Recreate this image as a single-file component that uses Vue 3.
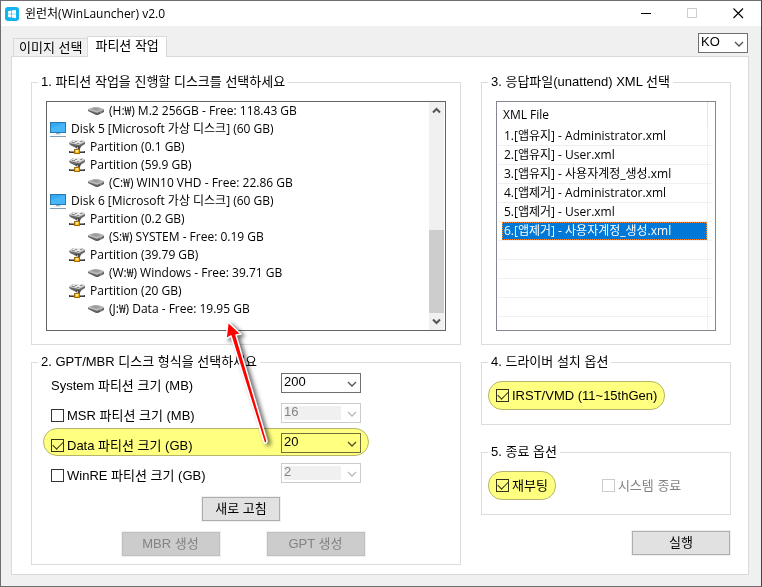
<template>
  <div class="window">
    <header class="title-bar">
      <svg class="app-icon" viewBox="0 0 14 14" aria-hidden="true">
        <rect width="14" height="14" rx="3" fill="#12b3ee" />
        <path d="M3 4.2 6.3 3.6V6.7H3zM6.9 3.5 11 2.8V6.7H6.9zM3 7.3H6.3V10.5L3 9.9zM6.9 7.3H11V11.3L6.9 10.6z" fill="#fff" />
      </svg>
      <h1>윈런처(WinLauncher) v2.0</h1>
      <div class="window-controls">
        <button type="button" aria-label="최소화">
          <svg viewBox="0 0 11 11"><path d="M0 5.5H10" stroke="#000" /></svg>
        </button>
        <button type="button" aria-label="최대화" disabled>
          <svg viewBox="0 0 11 11"><path d="M.5.5H9.5V9.5H.5z" fill="none" stroke="#ccc" /></svg>
        </button>
        <button type="button" aria-label="닫기">
          <svg viewBox="0 0 11 11"><path d="M.5.5 10 10M10 .5.5 10" stroke="#000" stroke-width="1.1" /></svg>
        </button>
      </div>
    </header>

    <main class="body">
      <div class="top-row">
        <nav class="tabs" role="tablist">
          <button
            v-for="tab in tabs"
            :key="tab"
            class="tab"
            :class="{ 'tab--active': tab === activeTab }"
            type="button"
            role="tab"
            :aria-selected="tab === activeTab"
            @click="activeTab = tab"
          >
            {{ tab }}
          </button>
        </nav>
        <span class="combo combo--lang">
          <select v-model="language" aria-label="언어">
            <option>KO</option>
            <option>EN</option>
          </select>
          <svg viewBox="0 0 10 6"><path d="M1 1 5 5 9 1" /></svg>
        </span>
      </div>

      <div class="panel">
        <div class="column column--left">
          <fieldset class="group">
            <legend>1. 파티션 작업을 진행할 디스크를 선택하세요</legend>
            <div class="group-list">
              <div class="tree">
                <ul>
                  <li v-for="node in nodes" :key="node.text" :class="`node node--${node.kind}`">
                    <svg v-if="node.kind === 'disk'" viewBox="0 0 16 16">
                      <rect x=".5" y="1.5" width="15" height="10" fill="#35a9f5" stroke="#2a78a8" />
                      <path d="M1 7 15 2V11H1z" fill="#55c0ff" opacity=".6" />
                      <path d="M6 12H10V13H6z" fill="#9ab4c4" />
                      <path d="M4 13.5H12" stroke="#dce6ec" />
                      <path d="M0 15.5H16" stroke="#7f9fb8" />
                    </svg>
                    <svg v-else-if="node.kind === 'partition'" viewBox="0 0 16 16">
                      <path d="M0 4 4 1H13L16 3V5L10 9 7 9 1 6z" fill="#6a6a6a" />
                      <path d="M0 4 4 1H13L16 3 10 6z" fill="#cfcfcf" />
                      <path d="M3 3 5 1H12L13 3 9 4.500z" fill="#e9e9e9" />
                      <path d="M3 3.500H6M6 2.500H8M8 4.500H10M11 2.500H13" stroke="#8b8b8b" />
                      <path d="M6 7H12L11 10H8z" fill="#4c4c4c" />
                      <path d="M8 8H9V11H8z" fill="#bbb" />
                      <path d="M0 12H16V14H0z" fill="#3c3c3c" />
                      <path d="M1 12.500H5M11 12.500H15" stroke="#909090" />
                      <rect x="5.500" y="10.500" width="5" height="4" fill="#f6b91e" stroke="#a86c00" />
                      <path d="M7 11H9V13H7z" fill="#ffeb9a" />
                    </svg>
                    <svg v-else viewBox="0 0 16 16">
                      <path d="M0 6V8L8 12H10L16 9V6L9 9z" fill="#5e5e5e" />
                      <path d="M0 6 6 4H10L16 6 9 9z" fill="#b2b2b2" />
                      <path d="M3 6 7 4.700 13 6 9 7.800z" fill="#9c9c9c" />
                      <path d="M0 6.500 9 9.500 16 6.500" fill="none" stroke="#d0d0d0" stroke-width=".7" />
                      <path d="M12 9.500 14 8.500" stroke="#8fae86" />
                    </svg>
                    <span>{{ node.text }}</span>
                  </li>
                </ul>
                <div class="scrollbar">
                  <button type="button" aria-label="위로">
                    <svg viewBox="0 0 9 7"><path d="M1 5.500 4.500 2 8 5.500" /></svg>
                  </button>
                  <div class="scroll-track"><div class="scroll-thumb"></div></div>
                  <button type="button" aria-label="아래로">
                    <svg viewBox="0 0 9 7"><path d="M1 1.500 4.500 5 8 1.500" /></svg>
                  </button>
                </div>
              </div>
            </div>
          </fieldset>

          <fieldset class="group group--format">
            <legend>2. GPT/MBR 디스크 형식을 선택하세요</legend>
            <div class="sizes">
              <div
                v-for="row in sizes"
                :key="row.id"
                class="size-row"
                :class="{ marked: row.checked }"
              >
                <div class="size-label">
                  <input v-if="row.optional" :id="`${row.id}-on`" v-model="row.checked" type="checkbox" />
                  <label :for="row.optional ? `${row.id}-on` : row.id">{{ row.label }}</label>
                </div>
                <span class="combo">
                  <select
                    :id="row.id"
                    v-model="row.value"
                    :aria-label="row.label"
                    :disabled="row.optional && !row.checked"
                  >
                    <option>{{ row.value }}</option>
                  </select>
                  <svg viewBox="0 0 10 6"><path d="M1 1 5 5 9 1" /></svg>
                </span>
              </div>
            </div>
            <div class="actions">
              <button class="btn btn--refresh" type="button">새로 고침</button>
            </div>
            <div class="actions actions--create">
              <button class="btn" type="button" disabled>MBR 생성</button>
              <button class="btn" type="button" disabled>GPT 생성</button>
            </div>
          </fieldset>

          <svg class="pointer" viewBox="0 0 60 140" aria-hidden="true">
            <path
              d="M12 7 10 24 15 21 48 127Q50 130 51 126L20 20 25 19z"
              fill="#fe0000"
              stroke="#fff"
              stroke-width="1.500"
              stroke-linejoin="round"
            />
          </svg>
        </div>

        <div class="column column--right">
          <fieldset class="group">
            <legend>3. 응답파일(unattend) XML 선택</legend>
            <div class="group-list">
              <div class="file-list">
                <table>
                  <thead>
                    <tr>
                      <th>XML File</th>
                      <td></td>
                    </tr>
                  </thead>
                  <tbody>
                    <tr
                      v-for="file in files"
                      :key="file"
                      :class="{ selected: file === selectedFile }"
                      @click="selectedFile = file"
                    >
                      <td><span>{{ file }}</span></td>
                      <td></td>
                    </tr>
                    <tr v-for="n in 4" :key="n">
                      <td></td>
                      <td></td>
                    </tr>
                    <tr class="last">
                      <td></td>
                      <td></td>
                    </tr>
                  </tbody>
                </table>
              </div>
            </div>
          </fieldset>

          <fieldset class="group group--driver">
            <legend>4. 드라이버 설치 옵션</legend>
            <div class="options">
              <label class="option marked">
                <input v-model="driver" type="checkbox" />
                <span>IRST/VMD (11~15thGen)</span>
              </label>
            </div>
          </fieldset>

          <fieldset class="group group--finish">
            <legend>5. 종료 옵션</legend>
            <div class="options">
              <label class="option marked">
                <input v-model="reboot" type="checkbox" />
                <span>재부팅</span>
              </label>
              <label class="option option--disabled">
                <input type="checkbox" disabled />
                <span>시스템 종료</span>
              </label>
            </div>
          </fieldset>

          <button class="btn btn--run" type="button">실행</button>
        </div>
      </div>
    </main>
  </div>
</template>

<script setup>
import { ref } from 'vue'

const tabs = ['이미지 선택', '파티션 작업']
const activeTab = ref('파티션 작업')
const language = ref('KO')

const nodes = [
  { kind: 'volume', text: '(H:₩) M.2 256GB - Free: 118.43 GB' },
  { kind: 'disk', text: 'Disk 5 [Microsoft 가상 디스크] (60 GB)' },
  { kind: 'partition', text: 'Partition (0.1 GB)' },
  { kind: 'partition', text: 'Partition (59.9 GB)' },
  { kind: 'volume', text: '(C:₩) WIN10 VHD - Free: 22.86 GB' },
  { kind: 'disk', text: 'Disk 6 [Microsoft 가상 디스크] (60 GB)' },
  { kind: 'partition', text: 'Partition (0.2 GB)' },
  { kind: 'volume', text: '(S:₩) SYSTEM - Free: 0.19 GB' },
  { kind: 'partition', text: 'Partition (39.79 GB)' },
  { kind: 'volume', text: '(W:₩) Windows - Free: 39.71 GB' },
  { kind: 'partition', text: 'Partition (20 GB)' },
  { kind: 'volume', text: '(J:₩) Data - Free: 19.95 GB' },
]

const sizes = ref([
  { id: 'system', label: 'System 파티션 크기 (MB)', value: '200', optional: false, checked: false },
  { id: 'msr', label: 'MSR 파티션 크기 (MB)', value: '16', optional: true, checked: false },
  { id: 'data', label: 'Data 파티션 크기 (GB)', value: '20', optional: true, checked: true },
  { id: 'winre', label: 'WinRE 파티션 크기 (GB)', value: '2', optional: true, checked: false },
])

const files = [
  '1.[앱유지] - Administrator.xml',
  '2.[앱유지] - User.xml',
  '3.[앱유지] - 사용자계정_생성.xml',
  '4.[앱제거] - Administrator.xml',
  '5.[앱제거] - User.xml',
  '6.[앱제거] - 사용자계정_생성.xml',
]
const selectedFile = ref(files[5])

const driver = ref(true)
const reboot = ref(true)
</script>

<style>
body {
  margin: 0;
}
</style>

<style scoped>
* {
  box-sizing: border-box;
}

.window {
  display: flex;
  flex-direction: column;
  min-height: 100vh;
  border: 1px solid #6e6e6e;
  border-right-color: #45433b;
  background: #f0f0f0;
  color: #000;
  font: 13px/16px "Liberation Sans", "Noto Sans CJK KR", sans-serif;
}

button,
select,
input {
  margin: 0;
  font: inherit;
  color: inherit;
}

/* title bar */
.title-bar {
  display: flex;
  align-items: center;
  height: 25px;
  padding-left: 4px;
  background: #fff;
}

.app-icon {
  width: 14px;
  height: 14px;
}

.title-bar h1 {
  flex: 1;
  margin: 0 0 0 6px;
  font: 12px/16px "Open Sans", "Noto Sans CJK KR", sans-serif;
}

.window-controls {
  display: flex;
}

.window-controls button {
  display: flex;
  justify-content: center;
  width: 46px;
  padding: 0;
  border: none;
  background: none;
}

.window-controls svg {
  width: 11px;
  height: 11px;
}

/* tabs */
.body {
  flex: 1;
  display: flex;
  flex-direction: column;
  padding: 0 12px 11px 10px;
}

.top-row {
  display: flex;
  justify-content: space-between;
  align-items: flex-end;
  height: 30px;
}

.tabs {
  position: relative;
  display: flex;
  align-items: flex-end;
  margin: 0 0 -1px 2px;
}

.tab {
  height: 19px;
  padding: 0 5px;
  border: 1px solid #d9d9d9;
  border-right: none;
  background: #f0f0f0;
}

.tab--active {
  height: 21px;
  padding: 0 7px 3px;
  border-right: 1px solid #d9d9d9;
  border-bottom: none;
  background: #fff;
}

.panel {
  flex: 1;
  display: flex;
  gap: 20px;
  padding: 17px 17px 8px 19px;
  border: 1px solid #d9d9d9;
  background: #fff;
}

.column {
  display: flex;
  flex-direction: column;
  gap: 9px;
  min-width: 0;
}

.column--left {
  position: relative;
  flex: 430;
}

.column--right {
  flex: 250;
}

/* group boxes */
.group {
  min-width: 0;
  margin: 0;
  padding: 0 6px;
  border: 1px solid #dcdcdc;
}

.group legend {
  height: 16px;
  padding: 0 3px;
  white-space: nowrap;
}

.group-list {
  padding: 11px 8px 13px;
}

/* disk tree */
.tree {
  display: flex;
  border: 1px solid #646464;
}

.tree ul {
  flex: 1;
  min-width: 0;
  margin: 0;
  padding: 0 0 12px;
  list-style: none;
  font: 12px/18px "Open Sans", "Noto Sans CJK KR", sans-serif;
}

.node {
  display: flex;
  align-items: center;
  gap: 5px;
  height: 18px;
  padding-left: 3px;
  white-space: nowrap;
}

.node--partition {
  padding-left: 22px;
}

.node--volume {
  padding-left: 41px;
}

.node svg {
  flex: none;
  width: 16px;
  height: 16px;
}

.scrollbar {
  display: flex;
  flex-direction: column;
  width: 16px;
  border-right: 1px solid #fff;
  background: #f0f0f0;
}

.scrollbar button {
  display: flex;
  align-items: center;
  justify-content: center;
  height: 17px;
  padding: 0;
  border: none;
  background: none;
}

.scrollbar svg {
  width: 9px;
  height: 7px;
  fill: none;
  stroke: #555;
  stroke-width: 2;
}

.scroll-track {
  flex: 1;
  display: flex;
  align-items: flex-end;
}

.scroll-thumb {
  width: 100%;
  height: 43%;
  background: #cdcdcd;
}

/* partition sizes */
.sizes {
  display: flex;
  flex-direction: column;
  gap: 10px;
  padding: 3px 13px 0;
}

.size-row {
  display: flex;
  align-items: flex-end;
  width: 310px;
  height: 20px;
}

.size-label {
  display: flex;
  align-items: center;
  gap: 3px;
  width: 230px;
  height: 15px;
}

.combo {
  position: relative;
  display: block;
  width: 80px;
  height: 20px;
}

.combo--lang {
  width: 50px;
  margin: 0 1px 3px 0;
}

.combo select {
  display: block;
  width: 100%;
  height: 100%;
  padding: 0 20px 2px 2px;
  border: 1px solid #707070;
  border-radius: 0;
  background: #fff;
  line-height: 16px;
  appearance: none;
}

.combo select:disabled {
  border-color: #ccc;
  background: linear-gradient(#f0f0f0, #f0f0f0) 2px 2px / 57px 14px no-repeat #fff;
  color: #838383;
  opacity: 1;
}

.combo svg {
  position: absolute;
  right: 4px;
  bottom: 6px;
  width: 10px;
  height: 6px;
  fill: none;
  stroke: #505050;
  stroke-width: 1.3;
  pointer-events: none;
}

.combo select:disabled + svg {
  stroke: #bbb;
}

input[type='checkbox'] {
  flex: none;
  width: 13px;
  height: 13px;
  border: 1px solid #333;
  background: #fff;
  appearance: none;
}

input[type='checkbox']:checked::before {
  content: '';
  display: block;
  width: 9px;
  height: 5px;
  margin: 1px;
  border: solid #333;
  border-width: 0 0 1px 1px;
  transform: rotate(-45deg);
}

input[type='checkbox']:disabled {
  border-color: #ccc;
}

/* highlighter over the options in use */
.marked {
  position: relative;
}

.marked::after {
  content: '';
  position: absolute;
  inset: -5px -8px;
  border: 1px solid #b5b56c;
  border-radius: 14px;
  background: #ffff80;
  mix-blend-mode: multiply;
  pointer-events: none;
}

.size-row.marked::after {
  bottom: -3px;
}

.actions {
  display: flex;
  justify-content: center;
  gap: 47px;
  padding: 14px 10px 0 0;
}

.actions--create {
  padding: 11px 6px 8px 0;
}

.btn {
  width: 98px;
  height: 24px;
  padding: 0 0 1px;
  border: 1px solid #adadad;
  background: #e1e1e1;
  box-shadow: 0 0 0 1px #f0f0f0;
}

.btn:disabled {
  border-color: #bfbfbf;
  background: #ccc;
  color: #838383;
}

.btn--refresh {
  width: 78px;
}

.btn--run {
  align-self: flex-end;
  margin: 7px 1px 0 0;
}

.pointer {
  position: absolute;
  top: 241px;
  left: 185px;
  width: 60px;
  height: 140px;
  overflow: visible;
  filter: drop-shadow(3px 2px 2px rgba(0, 0, 0, 0.6));
  pointer-events: none;
}

/* answer files */
.file-list {
  padding: 0 2px 0 1px;
  border: 1px solid #828790;
}

.file-list table {
  width: 100%;
  border-spacing: 0;
  table-layout: fixed;
  font: 12px/18px "Open Sans", "Noto Sans CJK KR", sans-serif;
}

.file-list th {
  height: 25px;
  padding: 0 0 0 5px;
  border-right: 1px solid #e5e5e5;
  font-weight: 400;
  text-align: left;
}

.file-list td {
  height: 19px;
  padding: 0 0 0 4px;
  border-right: 1px solid #f0f0f0;
  border-bottom: 1px solid #f0f0f0;
}

.file-list td:last-child {
  border-right: none;
}

.file-list th + td {
  width: 5px;
  border-bottom: none;
}

.file-list td span {
  display: block;
  height: 18px;
  padding-left: 2px;
  white-space: nowrap;
}

.file-list .selected span {
  background: #0078d7;
  color: #fff;
  outline: 1px dotted #ff8728;
  outline-offset: -1px;
}

.file-list .last td {
  height: 13px;
  border-bottom: none;
}

/* options */
.options {
  display: flex;
  padding: 17px 8px 20px;
}

.option {
  display: flex;
  align-items: center;
  gap: 3px;
  height: 17px;
  white-space: nowrap;
}

.option + .option {
  margin-left: 54px;
}

.option.marked::after {
  inset: -6px -8px;
}

.option--disabled {
  color: #838383;
}

.group--finish {
  margin-top: 10px;
}
</style>
